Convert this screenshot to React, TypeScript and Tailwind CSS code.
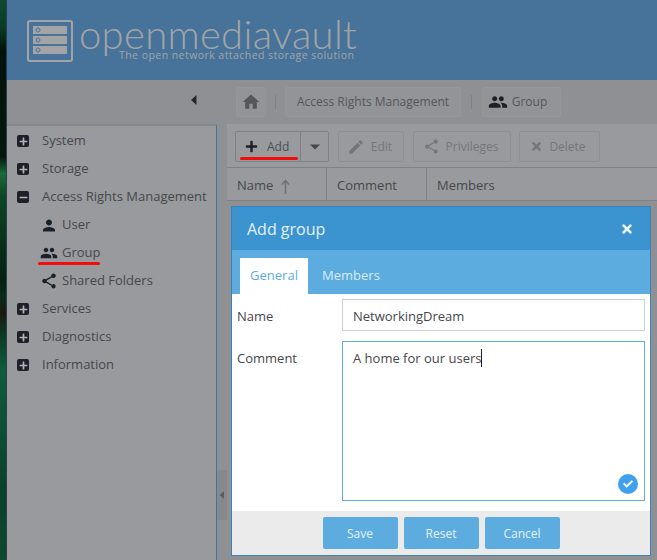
import React from "react";
import { MdHome, MdPeople, MdPerson, MdShare, MdEdit } from "react-icons/md";
import { FaPlus, FaMinus, FaTimes, FaCheck } from "react-icons/fa";

function Caret({ dir, className }: { dir: "left" | "down"; className?: string }) {
  return (
    <svg viewBox="0 0 10 10" className={className} fill="currentColor">
      {dir === "left" ? <path d="M7.5 0V10L2 5Z" /> : <path d="M0 2.5H10L5 7.5Z" />}
    </svg>
  );
}

function UpArrow() {
  return (
    <svg viewBox="0 0 9 15" className="w-[9px] h-[15px] ml-[8px]" fill="none" stroke="#6f7378" strokeWidth="1.6">
      <path d="M4.5 15V2M1 5.5L4.5 1.5L8 5.5" />
    </svg>
  );
}

function Logo() {
  return (
    <svg viewBox="0 0 46 42" className="w-[46px] h-[42px] shrink-0" fill="none">
      <rect x="1" y="1" width="44" height="40" rx="2" stroke="#a3a4a6" strokeWidth="2" />
      {[6, 16, 26].map((y) => (
        <g key={y}>
          <rect x="6" y={y} width="34" height="8" fill="#a3a4a6" />
          <circle cx="11" cy={y + 4} r="2" fill="#a3a4a6" stroke="#47739a" strokeWidth="1" />
        </g>
      ))}
    </svg>
  );
}

function TreeRow({ label, open }: { label: string; open?: boolean }) {
  return (
    <div className="h-7 flex items-center pl-[10px]">
      <span className="w-[12px] h-[12px] rounded-[2px] bg-[#1e2028] text-[#b4b5b9] flex items-center justify-center">
        {open ? <FaMinus size={9} /> : <FaPlus size={9} />}
      </span>
      <span className="ml-[13px] text-[13px] text-[#46474c]">{label}</span>
    </div>
  );
}

function SubRow({ label, icon }: { label: string; icon: React.ReactNode }) {
  return (
    <div className="h-7 flex items-center pl-[33px]">
      <span className="w-[18px] flex justify-center text-[#1e2028]">{icon}</span>
      <span className="ml-[4px] text-[13px] text-[#46474c]">{label}</span>
    </div>
  );
}

function Crumb({ children, className }: { children: React.ReactNode; className: string }) {
  return (
    <div className={`h-[30px] rounded-[2px] bg-[#939498] border border-[#96979b] flex items-center justify-center text-[12px] text-[#55565b] ${className}`}>
      {children}
    </div>
  );
}

function ToolButton({ icon, label, className }: { icon: React.ReactNode; label: string; className: string }) {
  return (
    <div className={`h-[31px] rounded-[2px] border border-[#8e8f93] flex items-center justify-center gap-[6px] pr-[3px] text-[12px] text-[#75767a] ${className}`}>
      {icon}
      <span>{label}</span>
    </div>
  );
}

function FooterButton({ label }: { label: string }) {
  return (
    <div className="w-[75px] h-[32px] pt-[1px] rounded-[2px] bg-[#5cacdf] flex items-center justify-center text-[12px] text-[#e6f2fa]">
      {label}
    </div>
  );
}

export default function App() {
  return (
    <div className="relative w-[657px] h-[560px] overflow-hidden flex font-['Open_Sans',sans-serif] bg-[#8f9094]">
      <div className="w-[7px] shrink-0 border-r border-[#2b3f4a] bg-[linear-gradient(180deg,#0c4a30_0%,#0a3a26_5%,#03120c_9%,#04170e_28%,#1a6a3a_31%,#0d4526_35%,#05200f_50%,#0a2a18_53%,#1a1a10_56%,#0b3a22_60%,#0f5c3c_66%,#0c5034_76%,#0a4028_88%,#0c4a2c_100%)]" />
      <div className="flex-1 flex flex-col min-w-0">
        <header className="h-[80px] shrink-0 bg-[#47739a] flex items-start pl-[20px] pt-[20px]">
          <Logo />
          <div className="relative ml-[6px] -mt-[10px] w-[280px] h-[50px]">
            <div className="pt-[2px] font-['Lato',sans-serif] font-light text-[40px] leading-[44px] text-[#a3a4a6] tracking-[0.3px] whitespace-nowrap">
              openmediavault
            </div>
            <div className="absolute left-[40px] top-[38px] text-[10.5px] leading-[14px] tracking-[0.45px] text-[#a3a4a6] whitespace-nowrap">
              The open network attached storage solution
            </div>
          </div>
        </header>

        <div className="flex-1 flex min-h-0">
          <aside className="w-[210px] shrink-0 flex flex-col">
            <div className="h-[44px] flex items-center justify-end pr-[18px] pb-[4px] text-[#25262c]">
              <Caret dir="left" className="w-[10px] h-[12px]" />
            </div>
            <nav className="flex-1 bg-[#999a9e] border-t-[2px] border-r border-t-[#87888c] border-r-[#47739a] pt-[1px]">
              <TreeRow label="System" />
              <TreeRow label="Storage" />
              <TreeRow label="Access Rights Management" open />
              <SubRow label="User" icon={<MdPerson size={19} />} />
              <SubRow label="Group" icon={<MdPeople size={20} />} />
              <SubRow label="Shared Folders" icon={<MdShare size={18} />} />
              <TreeRow label="Services" />
              <TreeRow label="Diagnostics" />
              <TreeRow label="Information" />
            </nav>
          </aside>

          <div className="w-[10px] shrink-0 flex items-end pb-[40px]">
            <div className="w-full h-[50px] bg-[#87888c] flex items-center justify-center text-[#5c5d62]">
              <Caret dir="left" className="w-[8px] h-[10px]" />
            </div>
          </div>

          <main className="flex-1 min-w-0 flex flex-col">
            <div className="h-[44px] flex items-start pt-[7px] pl-[9px]">
              <Crumb className="w-[30px] text-[#1e2028]"><MdHome size={20} /></Crumb>
              <div className="w-px h-[14px] bg-[#7f8084] mt-[8px] mx-[9px]" />
              <Crumb className="w-[176px]">Access Rights Management</Crumb>
              <div className="w-px h-[14px] bg-[#7f8084] mt-[8px] mx-[10px]" />
              <Crumb className="w-[79px] gap-[4px] pr-[8px]">
                <span className="text-[#1e2028]"><MdPeople size={20} /></span>Group
              </Crumb>
            </div>
            <div className="h-[44px] bg-[#999a9e] flex items-start pt-[7px] pl-[8px] border-b border-[#808185]">
              <div className="relative w-[94px] h-[31px] rounded-[2px] border border-[#808185] flex text-[12px] text-[#4b4c51]">
                <div className="w-[65px] flex items-center pl-[9px] border-r border-[#808185]">
                  <span className="text-[#1e2028]"><FaPlus size={13} /></span>
                  <span className="ml-[9px]">Add</span>
                </div>
                <div className="flex-1 flex items-center justify-center text-[#46474c]">
                  <Caret dir="down" className="w-[10px] h-[10px]" />
                </div>
              </div>
              <ToolButton className="w-[66px] ml-[9px]" icon={<MdEdit size={18} />} label="Edit" />
              <ToolButton className="w-[98px] ml-[9px]" icon={<MdShare size={17} />} label="Privileges" />
              <ToolButton className="w-[81px] ml-[8px]" icon={<FaTimes size={13} />} label="Delete" />
            </div>
            <div className="h-[33px] pt-[4px] bg-[#999a9e] flex text-[13px] text-[#46474c] border-b border-[#808185]">
              <div className="w-[100px] -mt-[4px] pt-[4px] flex items-center pl-[10px] border-r border-[#808185]">
                Name <UpArrow />
              </div>
              <div className="w-[100px] -mt-[4px] pt-[4px] flex items-center pl-[10px] border-r border-[#808185]">Comment</div>
              <div className="flex-1 flex items-center pl-[10px]">Members</div>
            </div>
          </main>
        </div>
      </div>

      {/* red annotations over the page */}
      <div className="absolute left-[38px] top-[262px] w-[62px] h-[3px] rounded-full bg-[#f20d0d]" />
      <div className="absolute left-[240px] top-[157px] w-[58px] h-[3px] rounded-full bg-[#f20d0d]" />

      {/* modal dialog */}
      <div className="absolute left-[231px] top-[206px] w-[420px] h-[350px] bg-white border border-[#3a83b8] flex flex-col">
        <div className="h-[43px] shrink-0 bg-[#3b94d0] flex items-center justify-between pl-[15px] pr-[16px]">
          <span className="text-[16px] text-[#e3f0f9]">Add group</span>
          <FaTimes size={14} className="text-[#eef6fb]" />
        </div>
        <div className="h-[44px] shrink-0 bg-[#5cacdf] flex items-end pl-[8px]">
          <div className="w-[68px] h-[36px] bg-white flex items-center justify-center text-[13px] text-[#5cacdf]">General</div>
          <div className="w-[86px] h-[36px] flex items-center justify-center text-[13px] text-[#d8ebf7]">Members</div>
        </div>
        <div className="flex-1 flex flex-col pt-[5px] pl-[5px] pr-[5px]">
          <div className="flex items-start">
            <label className="w-[105px] h-[32px] pt-[4px] flex items-center text-[13px] text-[#46474c]">Name</label>
            <div className="flex-1 h-[32px] pt-[3px] border border-[#cfcfcf] flex items-center pl-[10px] text-[13px] text-[#46474c]">
              NetworkingDream
            </div>
          </div>
          <div className="flex items-start mt-[10px]">
            <label className="w-[105px] h-[34px] pt-[2px] flex items-center text-[13px] text-[#46474c]">Comment</label>
            <div className="relative flex-1 h-[160px] border border-[#5cacdf] pl-[10px] pt-[5px] text-[13px] leading-[22px] text-[#46474c]">
              <span className="border-r border-[#222222]">A home for our users</span>
              <span className="absolute right-[6px] bottom-[6px] w-[20px] h-[20px] rounded-full bg-[#40a0ec] flex items-center justify-center text-white">
                <FaCheck size={10} />
              </span>
            </div>
          </div>
        </div>
        <div className="h-[44px] shrink-0 bg-[#ebebeb] flex items-center justify-center gap-[6px]">
          <FooterButton label="Save" />
          <FooterButton label="Reset" />
          <FooterButton label="Cancel" />
        </div>
      </div>
    </div>
  );
}
